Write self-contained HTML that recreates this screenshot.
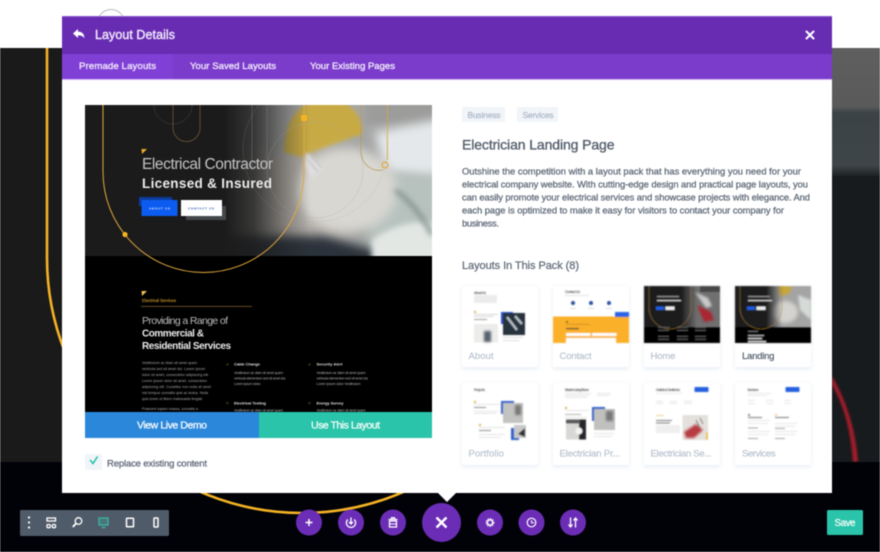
<!DOCTYPE html>
<html><head><meta charset="utf-8"><title>Layout Details</title>
<style>
html,body{margin:0;padding:0;background:#fff;width:880px;height:552px;overflow:hidden}
svg{display:block;filter:blur(.4px)}
text{font-family:"Liberation Sans",sans-serif}
.p{font-size:9.4px;fill:#616c7a;stroke:#616c7a;stroke-width:.28px}
.t{font-size:9.6px;fill:#efe6fb;stroke:#efe6fb;stroke-width:.35px}
.l{font-size:9.6px;fill:#bcc6d3;stroke:#bcc6d3;stroke-width:.22px}
.b{font-size:3.5px;fill:#a8a8a8}
.h{font-size:4px;font-weight:700;fill:#ddd}
.th{font-size:3.2px;font-weight:700;fill:#555}
</style></head><body>
<svg width="880" height="552" viewBox="0 0 880 552" xmlns="http://www.w3.org/2000/svg">
<defs>
<filter id="b8" x="-50%" y="-50%" width="200%" height="200%"><feGaussianBlur stdDeviation="8"/></filter>
<filter id="b5" x="-50%" y="-50%" width="200%" height="200%"><feGaussianBlur stdDeviation="5"/></filter>
<filter id="b3" x="-50%" y="-50%" width="200%" height="200%"><feGaussianBlur stdDeviation="3"/></filter>
<filter id="b2" x="-50%" y="-50%" width="200%" height="200%"><feGaussianBlur stdDeviation="1.800"/></filter>
<filter id="b1" x="-50%" y="-50%" width="200%" height="200%"><feGaussianBlur stdDeviation="1"/></filter>
<filter id="tb" x="-5%" y="-5%" width="110%" height="110%"><feGaussianBlur stdDeviation=".45"/></filter>
<filter id="s" x="-10%" y="-10%" width="120%" height="120%"><feGaussianBlur stdDeviation="2"/></filter>
<linearGradient id="rg" x1="0" y1="0" x2="0" y2="1"><stop offset="0" stop-color="#5f5f5f"/><stop offset=".45" stop-color="#5a5a5a"/><stop offset=".5" stop-color="#3b4346"/><stop offset=".9" stop-color="#3f4649"/><stop offset="1" stop-color="#181c1e"/></linearGradient>
<linearGradient id="dark" x1="0" y1="0" x2="1" y2="0"><stop offset="0" stop-color="#1b1b1b"/><stop offset=".35" stop-color="#1b1b1b" stop-opacity=".8"/><stop offset=".75" stop-color="#1b1b1b" stop-opacity=".28"/><stop offset="1" stop-color="#1b1b1b" stop-opacity="0"/></linearGradient>
<linearGradient id="d2" x1="0" y1="0" x2="1" y2="0"><stop offset="0" stop-color="#1c1c1c"/><stop offset="1" stop-color="#1c1c1c" stop-opacity="0"/></linearGradient>
<clipPath id="pv"><rect x="85" y="105" width="347" height="307"/></clipPath>
<clipPath id="hero"><rect x="85" y="105" width="347" height="151"/></clipPath>
<clipPath id="c3"><rect x="644" y="286" width="76" height="57"/></clipPath>
<clipPath id="c4"><rect x="735" y="286" width="76" height="57"/></clipPath>
</defs>

<!-- page background -->
<rect width="880" height="552" fill="#fff"/>
<rect y="48" width="880" height="414" fill="#1a1a1a"/>
<rect x="832" y="48" width="48" height="130" fill="url(#rg)"/>
<rect x="832" y="176" width="48" height="286" fill="#171b1d"/>
<path d="M832 385C844 405 851 432 853 462H858C856 430 846 400 832 376Z" fill="#a11b2a" filter="url(#b1)"/>
<rect y="462" width="880" height="90" fill="#010208"/>
<circle cx="111" cy="23" r="13.500" fill="none" stroke="#bcbcbc" stroke-width="1"/>
<path d="M47 48V258A255 255 0 0 0 557 258" fill="none" stroke="#f5b324" stroke-width="2.600"/>

<!-- modal -->
<rect x="62" y="16" width="770" height="477" fill="#fff"/>
<rect x="62" y="16" width="770" height="38" fill="#682cb3"/>
<rect x="62" y="16" width="770" height="1" fill="#8a5ad0"/>
<rect x="62" y="54" width="770" height="25" fill="#7b3bcb"/>
<rect x="62" y="54" width="111" height="25" fill="#8040d6"/>
<rect x="62" y="79" width="770" height="1" fill="#d8b8f4"/>
<path d="M73 33.500L78 29V31.600C82 31.600 84.300 33.800 84.500 38.500C83.200 36.200 81.300 35.400 78 35.400V38Z" fill="#fff"/>
<text x="95" y="39" font-size="12.500" fill="#f1e8fb" stroke="#f1e8fb" stroke-width=".4" textLength="80" lengthAdjust="spacing">Layout Details</text>
<path d="M806.500 31.500L813.500 38.500M813.500 31.500L806.500 38.500" stroke="#fff" stroke-width="2" stroke-linecap="round"/>
<text class="t" x="79" y="69" textLength="77" lengthAdjust="spacing">Premade Layouts</text>
<text class="t" x="190" y="69" textLength="86" lengthAdjust="spacing">Your Saved Layouts</text>
<text class="t" x="310" y="69" textLength="85" lengthAdjust="spacing">Your Existing Pages</text>

<!-- preview -->
<rect x="85" y="105" width="347" height="307" fill="#000"/>
<g clip-path="url(#hero)">
 <rect x="85" y="105" width="347" height="151" fill="#a5a6a5"/>
 <rect x="365" y="90" width="80" height="34" fill="#9c9c9b" filter="url(#b3)"/>
 <path d="M375 132L445 118V180L385 175Z" fill="#e4e8ea" filter="url(#b5)"/>
 <path d="M360 170L445 175V260H370Z" fill="#b7c2be" filter="url(#b5)"/>
 <rect x="240" y="150" width="110" height="90" fill="#b3aea8" filter="url(#b8)"/>
 <path d="M225 236H325L375 250L385 270H225Z" fill="#2c323a" filter="url(#b5)"/>
 <path d="M284 152C284 122 298 100 325 100C350 100 362 112 362 134L300 157Z" fill="#c8aa44" filter="url(#b2)"/>
 <ellipse cx="347" cy="190" rx="50" ry="42" fill="#d8d7d2" filter="url(#b5)"/>
 <path d="M306 152L325 168L312 178L304 166Z" fill="#dedede" filter="url(#b2)"/>
 <path d="M308 160L318 172M311 156L322 168" stroke="#999" stroke-width=".8" filter="url(#b1)" opacity=".7"/>
 <path d="M372 240C388 228 412 218 440 224V262H372Z" fill="#e2e7e4" filter="url(#b3)"/>
 <path d="M395 190C410 200 425 220 432 235" fill="none" stroke="#7d8d8a" stroke-width="4" filter="url(#b3)"/>
 <rect x="85" y="105" width="140" height="151" fill="#1b1b1b"/>
 <rect x="224" y="105" width="86" height="151" fill="url(#dark)"/>
 <circle cx="315" cy="170" r="48" fill="none" stroke="#9aa5ad" stroke-width=".5" opacity=".45"/>
 <circle cx="315" cy="150" r="72" fill="none" stroke="#9aa5ad" stroke-width=".5" opacity=".3"/>
 <path d="M252 105V170M267 105V170" stroke="#777" stroke-width=".5"/>
 <path d="M361 105V150C361 165 372 172 383 170" fill="none" stroke="#b99a52" stroke-width=".7"/>
 <path d="M387.500 105V160" stroke="#d8a73c" stroke-width=".8"/>
 <circle cx="385" cy="165" r="3" fill="none" stroke="#e0a838" stroke-width="1.200"/>
 <circle cx="173" cy="105" r="19" fill="none" stroke="#777" stroke-width=".5" stroke-dasharray="1 1"/>
 <path d="M173 105V128A13.500 13.500 0 0 0 200 128V105" fill="none" stroke="#6a5a33" stroke-width=".8"/>
</g>
<g clip-path="url(#pv)">
 <path d="M103 105V172A100.500 100.500 0 0 0 304 172V105" fill="none" stroke="#e2a93c" stroke-width="1"/>
</g>
<rect x="301" y="115" width="6" height="6" rx="1" fill="#f5b324"/>
<circle cx="125" cy="234.500" r="2.600" fill="#f5b324"/>
<path d="M141.500 149H147L142 154Z" fill="#f0ad2c"/>
<text x="142" y="169" font-size="15.500" fill="#c4c4c4" textLength="131" lengthAdjust="spacing">Electrical Contractor</text>
<text x="142" y="188" font-size="13.500" font-weight="700" fill="#ececec" textLength="130" lengthAdjust="spacing">Licensed &amp; Insured</text>
<rect x="139" y="197" width="33" height="9" fill="#0d3d9c"/>
<rect x="141.500" y="200" width="36" height="16" fill="#0c5cf2"/>
<rect x="186" y="206" width="40" height="14" fill="#45484a"/>
<rect x="181" y="200" width="41" height="16" fill="#fff"/>
<text x="149" y="209.500" font-size="3" font-weight="700" fill="#dfe8ff" textLength="21" lengthAdjust="spacing">ABOUT US</text>
<text x="188" y="209.500" font-size="3" font-weight="700" fill="#2a55b5" textLength="26" lengthAdjust="spacing">CONTACT US</text>

<path d="M141.500 291H147L142 296Z" fill="#f0c050"/>
<text x="142" y="302" font-size="4.300" fill="#c8942c" stroke="#c8942c" stroke-width=".1" textLength="34" lengthAdjust="spacing">Electrical Services</text>
<rect x="141" y="306" width="111" height=".8" fill="#7a5c2b"/>
<text x="142" y="324" font-size="10.500" fill="#b8b8b8" textLength="86" lengthAdjust="spacing">Providing a Range of</text>
<text x="142" y="336.500" font-size="10" font-weight="700" fill="#e8e8e8" textLength="62" lengthAdjust="spacing">Commercial &amp;</text>
<text x="142" y="349" font-size="10" font-weight="700" fill="#e8e8e8" textLength="89" lengthAdjust="spacing">Residential Services</text>
<text class="b" x="142" y="364" textLength="55">Vestibulum ac diam sit amet quam</text>
<text class="b" x="142" y="370" textLength="63">vehicula sed sit amet dui. Lorem ipsum</text>
<text class="b" x="142" y="376" textLength="67">dolor sit amet, consectetur adipiscing elit.</text>
<text class="b" x="142" y="382" textLength="65">Lorem ipsum dolor sit amet, consectetur</text>
<text class="b" x="142" y="388" textLength="69">adipiscing elit. Curabitur non nulla sit amet</text>
<text class="b" x="142" y="394" textLength="66">nisl tempus convallis quis ac lectus. Nulla</text>
<text class="b" x="142" y="400" textLength="61">quis lorem ut libero malesuada feugiat.</text>
<text class="b" x="142" y="410" textLength="56">Praesent sapien massa, convallis a</text>
<text x="226" y="366" font-size="5" fill="#8a6a2a">»</text><text x="308" y="366" font-size="5" fill="#8a6a2a">»</text>
<text x="226" y="404.500" font-size="5" fill="#8a6a2a">»</text><text x="308" y="404.500" font-size="5" fill="#8a6a2a">»</text>
<text class="h" x="234" y="365.500" textLength="26">Cable Change</text>
<text class="h" x="316.500" y="365.500" textLength="26">Security Alert</text>
<text class="h" x="234" y="404.500" textLength="32">Electrical Testing</text>
<text class="h" x="316.500" y="404.500" textLength="27">Energy Survey</text>
<text class="b" x="234" y="374" textLength="49">Vestibulum ac diam sit amet quam</text>
<text class="b" x="234" y="379.500" textLength="52">vehicula elementum sed sit amet dui.</text>
<text class="b" x="234" y="385" textLength="27">Lorem ipsum dolor.</text>
<text class="b" x="316.500" y="374" textLength="49">Vestibulum ac diam sit amet quam</text>
<text class="b" x="316.500" y="379.500" textLength="52">vehicula elementum sed sit amet dui.</text>
<text class="b" x="316.500" y="385" textLength="44">Lorem ipsum dolor Vestibulum</text>
<text class="b" x="234" y="411.500" textLength="49">Vestibulum ac diam sit amet quam</text>
<text class="b" x="316.500" y="411.500" textLength="49">Vestibulum ac diam sit amet quam</text>

<rect x="85" y="412" width="174" height="26" fill="#2b87da"/>
<rect x="259" y="412" width="173" height="26" fill="#29c4a9"/>
<text x="137" y="428.500" font-size="10.500" fill="#eef6fd" stroke="#eef6fd" stroke-width=".35" textLength="70" lengthAdjust="spacing">View Live Demo</text>
<text x="311" y="428.500" font-size="10.500" fill="#eefbf8" stroke="#eefbf8" stroke-width=".35" textLength="69" lengthAdjust="spacing">Use This Layout</text>

<rect x="85" y="454" width="17" height="16" rx="1.500" fill="#f1f5f9"/>
<path d="M90 460L93 463.500L97.500 456.500" fill="none" stroke="#29c4a9" stroke-width="1.600"/>
<text class="p" x="107" y="466.500" textLength="100" lengthAdjust="spacing" style="font-size:9.600px">Replace existing content</text>

<!-- right column -->
<rect x="462" y="107" width="43" height="15" rx="1.500" fill="#f1f5f9"/>
<rect x="517" y="107" width="41" height="15" rx="1.500" fill="#f1f5f9"/>
<text x="467.500" y="118" font-size="8.500" fill="#a9b6c6" stroke="#a9b6c6" stroke-width=".2" textLength="33" lengthAdjust="spacing">Business</text>
<text x="522.500" y="118" font-size="8.500" fill="#a9b6c6" stroke="#a9b6c6" stroke-width=".2" textLength="31" lengthAdjust="spacing">Services</text>
<text x="462" y="149.500" font-size="14" fill="#545f6d" stroke="#545f6d" stroke-width=".35" textLength="152.500" lengthAdjust="spacing">Electrician Landing Page</text>
<text class="p" x="462" y="174.500" textLength="339" lengthAdjust="spacing">Outshine the competition with a layout pack that has everything you need for your</text>
<text class="p" x="462" y="187.500" textLength="346" lengthAdjust="spacing">electrical company website. With cutting-edge design and practical page layouts, you</text>
<text class="p" x="462" y="200.500" textLength="348" lengthAdjust="spacing">can easily promote your electrical services and showcase projects with elegance. And</text>
<text class="p" x="462" y="213.500" textLength="322" lengthAdjust="spacing">each page is optimized to make it easy for visitors to contact your company for</text>
<text class="p" x="462" y="226.500" textLength="37" lengthAdjust="spacing">business.</text>
<text x="462" y="269" font-size="11" fill="#616c7a" stroke="#616c7a" stroke-width=".25" textLength="117" lengthAdjust="spacing">Layouts In This Pack (8)</text>

<!-- cards -->
<g fill="#dfe8f3" filter="url(#s)" opacity=".75">
<rect x="462" y="287" width="76" height="82"/><rect x="553" y="287" width="76" height="82"/><rect x="644" y="287" width="76" height="82"/><rect x="735" y="287" width="76" height="82"/>
<rect x="462" y="384" width="76" height="83"/><rect x="553" y="384" width="76" height="83"/><rect x="644" y="384" width="76" height="83"/><rect x="735" y="384" width="76" height="83"/>
</g>
<g fill="#fff">
<rect x="462" y="286" width="76" height="81" rx="2"/><rect x="553" y="286" width="76" height="81" rx="2"/><rect x="644" y="286" width="76" height="81" rx="2"/><rect x="735" y="286" width="76" height="81" rx="2"/>
<rect x="462" y="383" width="76" height="82" rx="2"/><rect x="553" y="383" width="76" height="82" rx="2"/><rect x="644" y="383" width="76" height="82" rx="2"/><rect x="735" y="383" width="76" height="82" rx="2"/>
</g>

<g filter="url(#tb)">
<!-- About -->
<text class="th" x="474" y="294" textLength="12">About Us</text>
<rect x="474" y="295" width="23" height="8" fill="#ececec"/>
<rect x="474" y="311" width="2" height="2" fill="#ddb04a"/>
<rect x="474" y="314" width="24" height=".8" fill="#ccc"/><rect x="474" y="316" width="20" height=".8" fill="#ccc"/><rect x="474" y="319" width="13" height="1" fill="#999"/>
<rect x="474" y="324" width="24" height="18.500" fill="#ececea"/>
<rect x="484" y="331" width="7" height="11" fill="#56606e" filter="url(#b1)"/>
<rect x="501" y="312" width="12" height="12" fill="#2550c8"/>
<rect x="503" y="313" width="22" height="22" fill="#26333e"/>
<path d="M507 317L517 330M515 316L522 324" stroke="#d8dee4" stroke-width="2.500" opacity=".8"/>
<rect x="503" y="337" width="20" height="1" fill="#ddd"/><rect x="503" y="340" width="16" height="1" fill="#ddd"/>
<!-- Contact -->
<text class="th" x="565" y="293" textLength="15">Contact Us</text>
<rect x="565" y="295" width="24" height="1" fill="#e4e4e4"/>
<circle cx="573" cy="303" r="2" fill="#28509f"/><circle cx="591" cy="303" r="2" fill="#28509f"/><circle cx="609" cy="303" r="2" fill="#28509f"/>
<rect x="570" y="308" width="6" height="1" fill="#ddd"/><rect x="588" y="308" width="6" height="1" fill="#ddd"/><rect x="606" y="308" width="6" height="1" fill="#ddd"/>
<rect x="553" y="316.500" width="76" height="26.500" fill="#fbb02a"/>
<rect x="615" y="312" width="14" height="5" fill="#2a63e6"/>
<rect x="566" y="321" width="2" height="2" fill="#8a6a10"/><rect x="566" y="324" width="24" height=".8" fill="#c58a20"/>
<rect x="566" y="328" width="13" height="1.200" fill="#333"/>
<rect x="566" y="333" width="24.500" height="3" fill="#fff"/><rect x="592" y="333" width="24.500" height="3" fill="#fff"/>
<rect x="566" y="338" width="50" height="5" fill="#fff"/>
<!-- Home -->
<g clip-path="url(#c3)">
<rect x="644" y="286" width="76" height="41" fill="#6f6f6f"/>
<path d="M695 292L708 298L712 306L706 308Z" fill="#c9c9c9" filter="url(#b1)"/>
<path d="M697 305L711 312L714 320L704 322Z" fill="#a92733" filter="url(#b1)"/>
<rect x="700" y="286" width="20" height="6" fill="#474747"/>
<rect x="644" y="286" width="38" height="41" fill="#1c1c1c"/>
<rect x="681" y="286" width="16" height="41" fill="url(#d2)"/>
<rect x="644" y="327" width="76" height="16" fill="#060606"/>
<path d="M649 286V308A19 19 0 0 0 691 308V286" fill="none" stroke="#a8823a" stroke-width=".5"/>
<rect x="657" y="296" width="22" height="1.200" fill="#999"/><rect x="657" y="300" width="24" height="1.200" fill="#ddd"/>
<rect x="656" y="306.500" width="8" height="3.500" fill="#1c5de0"/><rect x="665.500" y="306.500" width="9" height="3.500" fill="#eee"/>
<g fill="#666"><rect x="658" y="327" width="12" height=".8"/><rect x="658" y="330" width="11" height=".8"/><rect x="677" y="327" width="11" height=".8"/><rect x="677" y="330" width="11" height=".8"/><rect x="695" y="327" width="11" height=".8"/><rect x="695" y="330" width="11" height=".8"/><rect x="658" y="336" width="11" height=".8"/><rect x="658" y="339" width="11" height=".8"/><rect x="677" y="336" width="11" height=".8"/><rect x="677" y="339" width="11" height=".8"/><rect x="695" y="336" width="11" height=".8"/><rect x="695" y="339" width="11" height=".8"/></g>
</g>
<!-- Landing -->
<g clip-path="url(#c4)">
<rect x="735" y="286" width="76" height="41" fill="#a4a4a4"/>
<ellipse cx="785" cy="312" rx="13" ry="11" fill="#d4d3cf" filter="url(#b2)"/>
<path d="M778 286H792L789 294L780 296Z" fill="#c7a73b" filter="url(#b1)"/>
<path d="M798 295L811 300V320L800 310Z" fill="#d5dad7" filter="url(#b1)"/>
<rect x="735" y="286" width="32" height="41" fill="#1c1c1c"/>
<rect x="766" y="286" width="16" height="41" fill="url(#d2)"/>
<rect x="735" y="327" width="76" height="16" fill="#060606"/>
<path d="M740 286V308A19 19 0 0 0 782 308V286" fill="none" stroke="#a8823a" stroke-width=".5"/>
<rect x="748" y="296" width="22" height="1.200" fill="#999"/><rect x="748" y="300" width="24" height="1.200" fill="#ddd"/>
<rect x="747" y="306.500" width="8" height="3.500" fill="#1c5de0"/><rect x="756.500" y="306.500" width="9" height="3.500" fill="#eee"/>
<rect x="748" y="331" width="10" height=".8" fill="#888"/><rect x="748" y="335" width="16" height="1" fill="#bbb"/><rect x="748" y="338" width="14" height="1" fill="#eee"/><rect x="748" y="341" width="18" height="1" fill="#eee"/>
</g>
<!-- Portfolio -->
<text class="th" x="474" y="391" textLength="11">Projects</text>
<rect x="474" y="401" width="2" height="2" fill="#ddb04a"/><rect x="474" y="404" width="26" height=".8" fill="#ddd"/><rect x="474" y="407" width="12" height="1" fill="#888"/>
<rect x="474" y="411" width="24" height=".8" fill="#ddd"/><rect x="474" y="413" width="22" height=".8" fill="#ddd"/>
<rect x="501" y="401" width="13" height="13" fill="#2f5fcb"/><rect x="503" y="403" width="20" height="20" fill="#c3c3c1"/>
<rect x="515" y="405" width="6" height="10" fill="#777" filter="url(#b1)"/>
<rect x="479" y="424" width="2" height="2" fill="#ddb04a"/><rect x="479" y="427" width="26" height=".8" fill="#ddd"/><rect x="479" y="430" width="12" height="1" fill="#888"/>
<rect x="479" y="434" width="26" height=".8" fill="#ddd"/><rect x="479" y="437" width="22" height=".8" fill="#ddd"/>
<rect x="511" y="428" width="8" height="12" fill="#2f5fcb"/><rect x="514" y="425" width="12" height="13" fill="#c8c8c8"/>
<path d="M518 434L525 428V437Z" fill="#333"/>
<!-- Electrician Pr -->
<text class="th" x="565" y="391" textLength="24">Modern Living Room</text>
<rect x="565" y="393" width="26" height=".8" fill="#ddd"/><rect x="565" y="395" width="24" height=".8" fill="#ddd"/><rect x="565" y="397" width="22" height=".8" fill="#ddd"/>
<rect x="597" y="393" width="14" height=".8" fill="#ddd"/><rect x="597" y="395" width="12" height=".8" fill="#ddd"/>
<rect x="565" y="407" width="2" height="2" fill="#ddb04a"/><rect x="565" y="410" width="24" height=".8" fill="#ddd"/><rect x="565" y="414" width="16" height=".8" fill="#999"/><rect x="565" y="417" width="22" height=".8" fill="#ddd"/>
<rect x="566" y="419.500" width="20" height="20" fill="#d8d8d6"/><rect x="579" y="419.500" width="7" height="20" fill="#26262a"/><rect x="566" y="419.500" width="14" height="4" fill="#5a5a5a"/>
<circle cx="579" cy="431" r="3.500" fill="#f4f4f2"/>
<rect x="592" y="407" width="13" height="14" fill="#2f5fcb"/><rect x="594" y="409" width="21" height="21" fill="#c0c0be"/>
<rect x="606" y="411" width="7" height="10" fill="#777" filter="url(#b1)"/>
<rect x="594" y="433" width="20" height=".8" fill="#ddd"/><rect x="594" y="436" width="18" height=".8" fill="#ddd"/>
<!-- Electrician Se -->
<text class="th" x="656" y="391" textLength="24">Outlets &amp; Switches</text>
<rect x="656" y="393" width="26" height=".8" fill="#e4e4e4"/>
<rect x="694.500" y="387" width="14" height="5" rx=".8" fill="#2560e0"/>
<g fill="#e0e0e0"><rect x="656" y="401" width="7" height=".8"/><rect x="656" y="403" width="7" height=".8"/><rect x="670" y="401" width="7" height=".8"/><rect x="670" y="403" width="7" height=".8"/><rect x="684" y="401" width="8" height=".8"/><rect x="684" y="403" width="8" height=".8"/></g>
<rect x="656" y="415" width="8" height="1" fill="#ecd28d"/>
<rect x="656" y="420" width="16" height="1" fill="#777"/><rect x="656" y="422.500" width="14" height="1" fill="#777"/>
<rect x="656" y="425" width="24" height="8" fill="#efefef"/>
<rect x="682.500" y="415" width="25.500" height="25" rx="1" fill="#e4e1dc"/>
<path d="M684 432L696 424L703 430L694 438L686 438Z" fill="#b83b42" filter="url(#b1)"/>
<path d="M696 420L700 428M700 418L703 424" stroke="#777" stroke-width="1"/>
<rect x="706" y="432" width="2" height="8" fill="#eec05a"/>
<!-- Services -->
<text class="th" x="747.500" y="391" textLength="11">Services</text>
<rect x="747.500" y="393" width="24" height=".8" fill="#e4e4e4"/><rect x="747.500" y="395" width="20" height=".8" fill="#e4e4e4"/>
<rect x="785.500" y="387" width="14" height="5" rx=".8" fill="#2560e0"/>
<g fill="#e0e0e0"><rect x="748" y="400" width="7" height=".8"/><rect x="748" y="403" width="7" height=".8"/><rect x="766" y="400" width="7" height=".8"/><rect x="766" y="403" width="7" height=".8"/><rect x="784" y="400" width="7" height=".8"/><rect x="784" y="403" width="7" height=".8"/>
<rect x="748" y="420" width="22" height=".8"/><rect x="748" y="423" width="20" height=".8"/><rect x="748" y="431" width="22" height=".8"/><rect x="748" y="434" width="20" height=".8"/><rect x="775" y="423" width="22" height=".8"/><rect x="775" y="426" width="20" height=".8"/><rect x="775" y="431" width="22" height=".8"/><rect x="775" y="434" width="20" height=".8"/></g>
<rect x="748" y="414" width="2" height="2" fill="#888"/><rect x="775" y="414" width="2" height="2" fill="#ecd28d"/>
<rect x="748" y="417" width="14" height="1" fill="#777"/><rect x="775" y="417" width="14" height="1" fill="#777"/>
<rect x="748" y="427.500" width="10" height=".9" fill="#999"/><rect x="775" y="428" width="10" height=".9" fill="#999"/><rect x="748" y="438" width="10" height=".9" fill="#999"/><rect x="775" y="438" width="10" height=".9" fill="#999"/>
</g>

<text class="l" x="468.500" y="359" textLength="25" lengthAdjust="spacing">About</text>
<text class="l" x="559.500" y="359" textLength="32" lengthAdjust="spacing">Contact</text>
<text class="l" x="650.500" y="359" textLength="25" lengthAdjust="spacing">Home</text>
<text class="l" x="742" y="359" textLength="32.500" lengthAdjust="spacing" style="fill:#5a6573;stroke:#5a6573">Landing</text>
<text class="l" x="468.500" y="456.500" textLength="35.500" lengthAdjust="spacing">Portfolio</text>
<text class="l" x="559.500" y="456.500" textLength="60.500" lengthAdjust="spacing">Electrician Pr...</text>
<text class="l" x="650.500" y="456.500" textLength="61" lengthAdjust="spacing">Electrician Se...</text>
<text class="l" x="742" y="456.500" textLength="33.500" lengthAdjust="spacing">Services</text>

<!-- toolbar -->
<rect x="20" y="510" width="149" height="26" rx="1.500" fill="#505b69"/>
<g fill="#fff"><circle cx="29" cy="517.500" r="1.100"/><circle cx="29" cy="522.500" r="1.100"/><circle cx="29" cy="527.500" r="1.100"/></g>
<g fill="none" stroke="#fff" stroke-width="1.300">
<rect x="47" y="518" width="8.500" height="3"/><rect x="47" y="524.500" width="3.200" height="3.200" rx="1"/><rect x="52.300" y="524.500" width="3.200" height="3.200" rx="1"/>
<circle cx="78.500" cy="521" r="3.300"/><path d="M76 523.500L72.800 527" stroke-width="1.900"/>
<rect x="99" y="518" width="9" height="7" stroke="#3ab59f" fill="#3ab59f" fill-opacity=".3"/><path d="M101.500 527.500H105.500" stroke="#3ab59f"/>
<rect x="126.500" y="518.200" width="7" height="8.600" rx=".7" stroke-width="1.500"/>
<rect x="154" y="518" width="4" height="9" rx=".7" stroke-width="1.500"/>
</g>

<!-- round buttons -->
<g fill="#6c2db6">
<circle cx="309" cy="522.500" r="13"/><circle cx="351" cy="522.500" r="13"/><circle cx="393" cy="522.500" r="13"/>
<circle cx="441.500" cy="522.500" r="19.500"/>
<circle cx="490" cy="522.500" r="13"/><circle cx="531.500" cy="522.500" r="13"/><circle cx="573" cy="522.500" r="13"/>
</g>
<path d="M438 493H456L447 502Z" fill="#fff"/>
<g stroke="#fff" fill="none" stroke-width="1.500">
<path d="M305.500 522.500H312.500M309 519V526"/>
<path d="M347.800 519.500A4.600 4.600 0 1 0 354.200 519.500" stroke-width="1.300"/><path d="M351 517.500V523.500M349 521.800L351 524L353 521.800" stroke-width="1.300"/>
<path d="M388.500 519.500H397.500M391.500 519V517.800H394.500V519" stroke-width="1.300"/><rect x="389.500" y="521" width="7" height="6" stroke-width="1.300"/><path d="M389.500 524H396.500" stroke-width="1"/>
<path d="M436.500 517.500L446.500 527.500M446.500 517.500L436.500 527.500" stroke-width="2.400"/>
<circle cx="490" cy="522.500" r="2.600" stroke-width="1.500"/><circle cx="490" cy="522.500" r="3.900" stroke-width="1" stroke-dasharray="1.500 1.100"/>
<circle cx="531.500" cy="522.500" r="4.300" stroke-width="1.200"/><path d="M531.500 520V522.800H534.200" stroke-width="1"/>
<path d="M570.500 517.500V526.500M568.500 524.500L570.500 527L572.500 524.500M575.500 527.500V518.500M573.500 520.500L575.500 518L577.500 520.500" stroke-width="1.300"/>
</g>

<!-- save -->
<rect x="827" y="510" width="36" height="25" rx="1.500" fill="#29c4a9"/>
<text x="834.500" y="526" font-size="9.800" fill="#f1fbf9" stroke="#f1fbf9" stroke-width=".3" textLength="21" lengthAdjust="spacing">Save</text>
</svg>
</body></html>
